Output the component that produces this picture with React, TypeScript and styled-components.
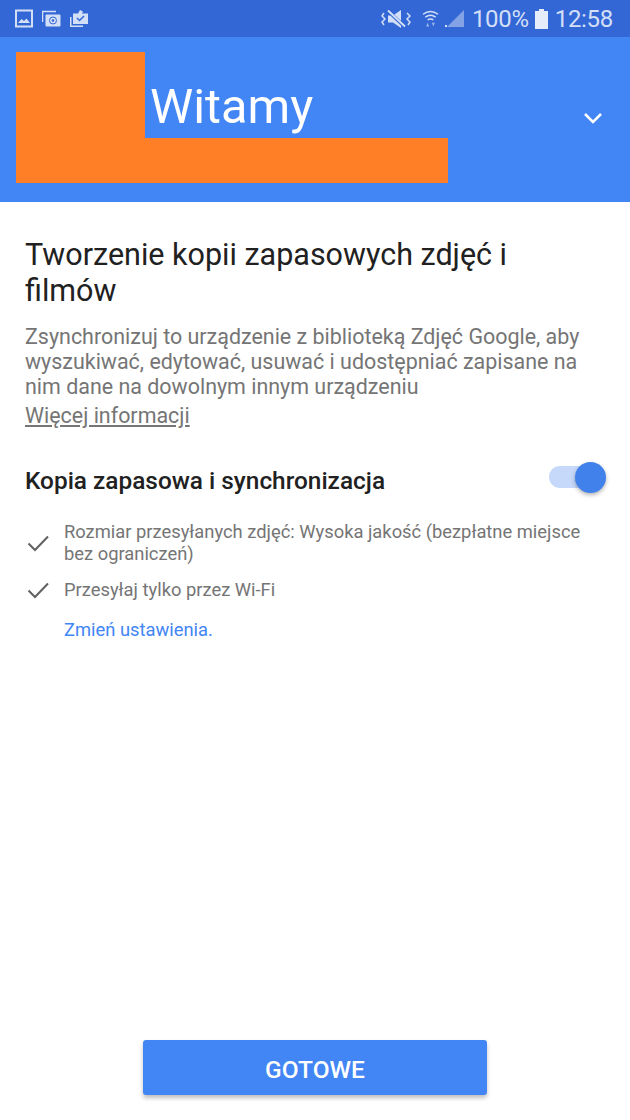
import { createGlobalStyle } from "styled-components";
import styled from "styled-components";

const Global = createGlobalStyle`
  html, body { margin: 0; padding: 0; background: #fff; }
  * { box-sizing: border-box; }
`;

const Page = styled.div`
  width: 630px; height: 1120px; overflow: hidden;
  display: flex; flex-direction: column;
  font-family: Roboto, "Noto Sans", sans-serif;
  background: #fff;
`;

const StatusBar = styled.div`
  height: 37px; flex: none;
  background: #3367d6;
  display: flex; align-items: center; justify-content: space-between;
  padding: 0 17px 0 15px;
  color: #d3dff6;
`;

const StatusGroup = styled.div<{ $gap: number }>`
  display: flex; align-items: center; gap: ${({ $gap }) => $gap}px;
`;

const StatusText = styled.span<{ $ml?: number }>`
  font-size: 24px; line-height: 37px; letter-spacing: -0.3px;
  padding-top: 1px;
  margin-left: ${({ $ml }) => $ml ?? 0}px;
`;

const Header = styled.header`
  height: 165px; flex: none;
  background: #4285f4;
  padding: 15px 27px 0 16px;
  display: flex; align-items: flex-start;
`;

const BlockTall = styled.div`
  width: 129px; height: 131px; flex: none;
  background: #ff7f27;
`;

const HeaderCol = styled.div`
  display: flex; flex-direction: column;
`;

const Welcome = styled.h1`
  margin: 0; height: 86px; padding: 27px 0 0 5px;
  font-size: 48.7px; line-height: 56px; font-weight: 400;
  color: #fff;
`;

const BlockWide = styled.div`
  width: 303px; height: 45px;
  background: #ff7f27;
`;

const Chevron = styled.svg`
  margin: 59px 0 0 auto; flex: none;
`;

const Main = styled.main`
  flex: 1;
  padding: 35px 24px 0 25px;
  display: flex; flex-direction: column;
`;

const Title = styled.h2`
  margin: 0; max-width: 500px;
  font-size: 30.5px; line-height: 36px; font-weight: 400;
  color: #212121;
`;

const Body = styled.p`
  margin: 15px 0 0;
  font-size: 21.45px; line-height: 25px;
  color: #757575;
`;

const MoreLink = styled.a`
  display: block; margin-top: 4px;
  font-size: 21.45px; line-height: 25px;
  color: #757575; text-decoration: underline;
`;

const SyncRow = styled.div`
  margin-top: 36px;
  display: flex; align-items: center; justify-content: space-between;
  height: 32px;
`;

const SyncLabel = styled.span`
  font-size: 24.4px; font-weight: 500; color: #212121;
`;

const Switch = styled.div`
  position: relative;
  width: 53px; height: 22px; margin: 0 4px 6px 0;
  border-radius: 11px;
  background: #c6d9fb;
`;

const Knob = styled.div`
  position: absolute; right: -4px; top: -4px;
  width: 31px; height: 31px; border-radius: 50%;
  background: #4081ec;
  box-shadow: 0 2px 4px rgba(0, 0, 0, 0.3);
`;

const CheckList = styled.ul`
  list-style: none; margin: 25px 0 0; padding: 0;
  display: flex; flex-direction: column; gap: 14px;
`;

const CheckItem = styled.li`
  display: flex; align-items: center; gap: 13px;
  font-size: 18.35px; line-height: 22px; color: #757575;
`;

const CheckText = styled.span`
  max-width: 525px;
`;

const CheckIcon = styled.svg`
  flex: none; margin-left: 1px;
`;

const ChangeLink = styled.a`
  display: block; margin: 18px 0 0 39px;
  font-size: 18.35px; line-height: 22px;
  color: #4285f4;
`;

const Footer = styled.footer`
  flex: none; height: 80px;
  display: flex; justify-content: center; align-items: flex-start;
`;

const DoneButton = styled.button`
  width: 344px; height: 55px;
  border: none; border-radius: 3px;
  padding: 3px 0 0;
  background: #4285f4; color: #fff;
  font-family: inherit; font-size: 24.5px; font-weight: 500;
  box-shadow: 0 3px 4px rgba(0, 0, 0, 0.25);
`;

function Check() {
  return (
    <CheckIcon width="25" height="20" viewBox="0 0 25 20">
      <path d="M2.5 10.5 L9 17 L22 3.5" fill="none" stroke="#616161" strokeWidth="2" />
    </CheckIcon>
  );
}

export default function App() {
  return (
    <Page>
      <Global />
      <StatusBar>
        <StatusGroup $gap={9}>
          <svg width="18" height="19" viewBox="0 0 18 19">
            <rect x="1" y="1.5" width="16" height="16" fill="none" stroke="#d3dff6" strokeWidth="2" />
            <path d="M3 14 L6.5 10 L9 12 L11.5 9.5 L15 14 Z" fill="#d3dff6" />
          </svg>
          <svg width="19" height="17" viewBox="0 0 19 17">
            <path d="M0.5 12 V1.5 H14" fill="none" stroke="#d3dff6" strokeWidth="1.5" />
            <rect x="3.5" y="4.5" width="15" height="12" rx="1" fill="#d3dff6" />
            <circle cx="11" cy="10.5" r="3.5" fill="none" stroke="#3367d6" strokeWidth="1" />
            <circle cx="11" cy="10.5" r="1.3" fill="#3367d6" />
          </svg>
          <svg width="18" height="19" viewBox="0 0 18 19">
            <path d="M0 8 H1.5 V16.5 H13 V18 H0 Z" fill="#d3dff6" />
            <path d="M3 4.5 H8 L10 1 L13 2.5 L12 4.5 H18 V15 H3 Z" fill="#d3dff6" />
            <path d="M7 9 L9.5 11.5 L14 7" fill="none" stroke="#3367d6" strokeWidth="1.5" />
          </svg>
        </StatusGroup>
        <StatusGroup $gap={0}>
          <svg width="30" height="22" viewBox="0 0 30 22">
            <path d="M7 7.5 H12 L20 2 V20 L12 14.5 H7 Z" fill="#d3dff6" />
            <path d="M7 3 L24 19" stroke="#3367d6" strokeWidth="3.5" />
            <path d="M7 2.5 L24 18.5" stroke="#d3dff6" strokeWidth="2" />
            <path d="M3 5 L1 8 L4 11 L1 14 L3 17" fill="none" stroke="#d3dff6" strokeWidth="1.5" />
            <path d="M26 5 L29 8 L26 11 L29 14 L27 17" fill="none" stroke="#d3dff6" strokeWidth="1.5" />
          </svg>
          <svg width="17" height="20" viewBox="0 0 18 20" style={{ marginLeft: 11 }}>
            <path d="M1 5 Q9 -1 17 5" fill="none" stroke="#d3dff6" strokeWidth="1.5" />
            <path d="M3.5 8 Q9 4 14.5 8" fill="none" stroke="#d3dff6" strokeWidth="1.5" />
            <path d="M6 11 Q9 9 12 11" fill="none" stroke="#d3dff6" strokeWidth="1.5" />
            <path d="M6 14 L7.5 18 H4.5 Z M12 18 L10.5 14 H13.5 Z" fill="#d3dff6" opacity="0.7" />
          </svg>
          <svg width="20" height="19" viewBox="0 0 20 19" style={{ marginLeft: 6 }}>
            <path d="M19 1 V18 H2 Z" fill="#d3dff6" opacity="0.5" />
            <rect x="0" y="16" width="2" height="2" fill="#d3dff6" />
          </svg>
          <StatusText $ml={7}>100%</StatusText>
          <svg width="13" height="20" viewBox="0 0 13 20" style={{ marginLeft: 6 }}>
            <path d="M4 0 H9 V2 H13 V20 H0 V2 H4 Z" fill="#e6ecfa" />
          </svg>
          <StatusText $ml={7}>12:58</StatusText>
        </StatusGroup>
      </StatusBar>

      <Header>
        <BlockTall />
        <HeaderCol>
          <Welcome>Witamy</Welcome>
          <BlockWide />
        </HeaderCol>
        <Chevron width="20" height="14" viewBox="0 0 20 14">
          <path d="M2 3 L10 11 L18 3" fill="none" stroke="#fff" strokeWidth="2.5" />
        </Chevron>
      </Header>

      <Main>
        <Title>Tworzenie kopii zapasowych zdjęć i filmów</Title>
        <Body>
          Zsynchronizuj to urządzenie z biblioteką Zdjęć Google, aby wyszukiwać, edytować, usuwać i udostępniać zapisane na nim dane na dowolnym innym urządzeniu
        </Body>
        <MoreLink>Więcej informacji</MoreLink>
        <SyncRow>
          <SyncLabel>Kopia zapasowa i synchronizacja</SyncLabel>
          <Switch><Knob /></Switch>
        </SyncRow>
        <CheckList>
          <CheckItem>
            <Check />
            <CheckText>Rozmiar przesyłanych zdjęć: Wysoka jakość (bezpłatne miejsce bez ograniczeń)</CheckText>
          </CheckItem>
          <CheckItem>
            <Check />
            <CheckText>Przesyłaj tylko przez Wi-Fi</CheckText>
          </CheckItem>
        </CheckList>
        <ChangeLink>Zmień ustawienia.</ChangeLink>
      </Main>

      <Footer>
        <DoneButton>GOTOWE</DoneButton>
      </Footer>
    </Page>
  );
}
